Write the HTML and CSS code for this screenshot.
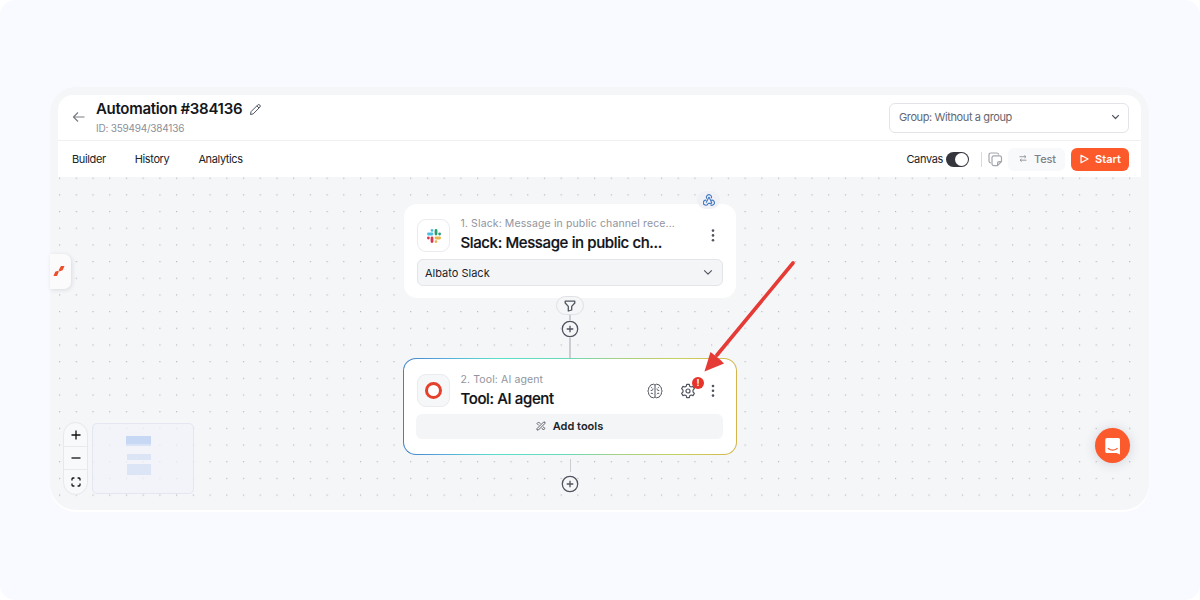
FILE: index.html
```
<!DOCTYPE html>
<html lang="en">
<head>
  <meta charset="UTF-8" />
  <meta name="viewport" content="width=device-width, initial-scale=1.0"/>
  <title>Automation #384136</title>
  <link rel="stylesheet" href="styles.css">
</head>
<body>
  <div class="page">
    <div class="app">
      <header class="top">
        <div class="title-row">
          <svg class="back" width="14" height="12" viewBox="0 0 14 12"><path d="M12.5 6H1.5M6 1.5L1.5 6L6 10.5"/></svg>
          <div class="title">
            <h1>Automation #384136
              <svg width="13" height="13" viewBox="0 0 13 13"><path d="M1.5 11.5L2 8.7L8.8 1.9Q9.8 1 10.8 2Q11.8 3 10.9 4.1L4.2 10.9ZM7.9 2.9L10 5"/></svg>
            </h1>
            <span>ID: 359494/384136</span>
          </div>
          <div class="group">Group: Without a group
            <svg width="9" height="6" viewBox="0 0 9 6"><path d="M1.2 1.2L4.5 4.5L7.8 1.2"/></svg>
          </div>
        </div>
        <div class="tab-row">
          <nav>
            <a>Builder</a>
            <a>History</a>
            <a>Analytics</a>
          </nav>
          <div class="actions">
            <span>Canvas</span>
            <div class="toggle"></div>
            <div class="divider"></div>
            <svg class="copy" width="15" height="15" viewBox="0 0 15 15"><path d="M3 11Q1 10.8 1 9V3Q1 1 3 1H8.5Q10.4 1 10.8 2.6"/><path d="M6 3.8H11.5Q13.5 3.8 13.5 5.8V9.5L9.5 13.7H6Q4 13.7 4 11.7V5.8Q4 3.8 6 3.8ZM13.3 9.6H11Q9.6 9.6 9.6 11V13.4"/></svg>
            <button class="test"><svg width="8" height="7" viewBox="0 0 8 7"><path d="M.5 1.7H7M5.4 .3L7 1.7L5.4 3M7.5 5.2H1M2.6 3.9L1 5.2L2.6 6.6"/></svg>Test</button>
            <button class="start"><svg width="9" height="10" viewBox="0 0 9 10"><path d="M1 1.2V8.8L8 5Z"/></svg>Start</button>
          </div>
        </div>
      </header>

      <main class="canvas">
        <svg class="dots" width="1099" height="333">
          <defs>
            <pattern id="dot" width="16.72" height="16.68" patternUnits="userSpaceOnUse" x="9" y="0.6">
              <rect width="1.2" height="1.2"/>
            </pattern>
          </defs>
          <rect x="8" width="1084" height="322" fill="url(#dot)"/>
        </svg>

        <div class="side-tab">
          <svg width="12" height="12" viewBox="0 0 12 12"><path d="M6 4.6L8 1H11.5L9.6 5.2L6.2 6.5ZM.5 11L2.2 6.7L5.7 5.5L5.5 7.6L4 11Z"/></svg>
        </div>

        <div class="link first"></div>
        <div class="link second"></div>

        <section class="card slack">
          <div class="card-head">
            <div class="logo">
              <svg width="16" height="16" viewBox="0 0 16 16">
                <g stroke-width="2.8" stroke-linecap="round">
                  <path stroke="#4fbfe0" d="M2.4 6H6M6 2.3V2.4"/>
                  <path stroke="#2c9c78" d="M10 2.4V6M13.6 6V6.01"/>
                  <path stroke="#e9b44c" d="M10 10H13.6M10 13.6V13.61"/>
                  <path stroke="#d8344e" d="M6 10V13.6M2.4 10V10.01"/>
                </g>
              </svg>
            </div>
            <div class="names">
              <small>1. Slack: Message in public channel rece...</small>
              <h2>Slack: Message in public ch...</h2>
            </div>
            <svg class="more" width="4" height="14" viewBox="0 0 4 14"><circle cx="2" cy="1.6" r="1.3"/><circle cx="2" cy="6.4" r="1.3"/><circle cx="2" cy="11.2" r="1.3"/></svg>
          </div>
          <div class="account">Albato Slack
            <svg width="10" height="7" viewBox="0 0 10 7"><path d="M1.2 1.4L5 5.2L8.8 1.4"/></svg>
          </div>
          <div class="hook">
            <svg width="12" height="12" viewBox="0 0 12 12"><path d="M3.9 4.6A2.5 2.5 0 1 1 8.2 4.3M6 3.1L3.1 8.7M3.3 6.2A2.5 2.5 0 1 0 5.2 9.4H8.9M6 3.1L8.9 8.9M7.6 6.6A2.5 2.5 0 1 1 7.4 10.7"/></svg>
          </div>
        </section>

        <div class="filter">
          <svg width="12" height="12" viewBox="0 0 12 12"><path d="M1.2 1.2H10.8V3L7.7 6.4V10L4.3 11V6.4L1.2 3Z"/></svg>
        </div>
        <div class="plus one"><svg width="18" height="18" viewBox="0 0 18 18"><circle cx="9" cy="9" r="7.7"/><path d="M9 5.7V12.3M5.7 9H12.3"/></svg></div>

        <section class="card agent">
          <div class="card-head">
            <div class="logo grey"><div class="ring"></div></div>
            <div class="names">
              <small>2. Tool: AI agent</small>
              <h2>Tool: AI agent</h2>
            </div>
            <svg class="brain" width="16" height="16" viewBox="0 0 16 16"><path d="M8 2.1Q6.6 .5 5 1.6Q3.2 1.5 3 3.5Q1 4.2 1.6 6.3Q.2 8 1.6 9.7Q1 11.8 3 12.5Q3.2 14.5 5 14.4Q6.6 15.5 8 13.9Q9.4 15.5 11 14.4Q12.8 14.5 13 12.5Q15 11.8 14.4 9.7Q15.8 8 14.4 6.3Q15 4.2 13 3.5Q12.8 1.5 11 1.6Q9.4 .5 8 2.1V13.9M3.7 7.4H5.1Q6 7.1 6 5.5M3.8 10.3Q5.6 9.8 6 11.2M12.3 7.4H10.9Q10 7.1 10 5.5M12.2 10.3Q10.4 9.8 10 11.2M4.3 4.8L5.1 4M11.7 4.8L10.9 4"/></svg>
            <div class="settings">
              <svg width="16" height="16" viewBox="0 0 16 16"><path d="M6.7 1.3H9.3L9.7 3.2L11.2 4L13 3.4L14.4 5.7L13 7.1V8.9L14.4 10.3L13 12.6L11.2 12L9.7 12.8L9.3 14.7H6.7L6.3 12.8L4.8 12L3 12.6L1.6 10.3L3 8.9V7.1L1.6 5.7L3 3.4L4.8 4L6.3 3.2Z"/><circle cx="8" cy="8" r="2"/></svg>
              <span class="alert">!</span>
            </div>
            <svg class="more" width="4" height="14" viewBox="0 0 4 14"><circle cx="2" cy="2" r="1.3"/><circle cx="2" cy="6.8" r="1.3"/><circle cx="2" cy="11.6" r="1.3"/></svg>
          </div>
          <button class="add"><svg width="10" height="10" viewBox="0 0 10 10"><path d="M1 7.6L7.4 1.2L9 1L8.8 2.6L2.4 9L1 9ZM1 2.6L2.6 1L4.4 2.8M1 2.6L2.8 4.4M5.8 7L7.4 9L9 7.4L7 5.8"/></svg>Add tools</button>
        </section>

        <div class="plus two"><svg width="18" height="18" viewBox="0 0 18 18"><circle cx="9" cy="9" r="7.7"/><path d="M9 5.7V12.3M5.7 9H12.3"/></svg></div>

        <svg class="arrow" width="96" height="116" viewBox="0 0 96 116"><path class="shaft" d="M90 4L14 96"/><path class="tip" d="M1.5 112.5L7.5 93L12 96.5L17 100.5L21 104.5Z"/></svg>

        <div class="zoom">
          <div><svg width="10" height="10" viewBox="0 0 10 10"><path d="M5 .5V9.5M.5 5H9.5"/></svg></div>
          <div><svg width="10" height="10" viewBox="0 0 10 10"><path d="M.5 5H9.5"/></svg></div>
          <div><svg width="10" height="10" viewBox="0 0 10 10"><path d="M1 3.4V2Q1 1 2 1H3.4M6.6 1H8Q9 1 9 2V3.4M9 6.6V8Q9 9 8 9H6.6M3.4 9H2Q1 9 1 8V6.6"/></svg></div>
        </div>
        <div class="minimap"><i></i><i></i><i></i></div>

        <div class="chat">
          <svg width="18" height="18" viewBox="0 0 18 18"><path class="bubble" d="M3 1H14.5Q16 1 16 2.5V17.5L12.5 16H3Q1.3 16 1.3 14.5V2.5Q1.3 1 3 1Z"/><path class="smile" d="M4.2 11.5Q8.7 14.8 13.2 11.5"/></svg>
        </div>
      </main>
    </div>
  </div>
</body>
</html>
```
FILE: styles.css
```
* {
  box-sizing: border-box;
}

body {
  margin: 0;
  background: #fff;
  font-family: Inter, "Liberation Sans", sans-serif;
  color: #202329;
  font-size: 11px;
}

svg {
  display: block;
  flex: none;
  fill: none;
  stroke: #50545e;
  stroke-width: 1.2;
  stroke-linejoin: round;
}

h1, h2 {
  margin: 0;
  font-weight: 600;
  white-space: nowrap;
}

button {
  border: none;
  font: inherit;
  display: flex;
  align-items: center;
  justify-content: center;
}

.page {
  width: 1200px;
  height: 600px;
  padding: 87px 51px 0 50px;
  background: #f9faff;
  border-radius: 15px;
}

.app {
  height: 423px;
  background: #f5f6f8;
  border-radius: 26px;
  box-shadow: 0 2px 0 #fff;
}

.top {
  height: 90px;
  padding: 8px 8px 0;
}

.title-row {
  display: flex;
  align-items: center;
  height: 46px;
  padding: 0 12px 0 14px;
  background: #fff;
  border-radius: 15px 15px 0 0;
  border-bottom: 1px solid #eff0f2;
}

.back {
  margin-top: -1px;
  stroke: #7b7e86;
}

.title {
  margin-left: 10px;
}

.title h1 {
  display: flex;
  align-items: center;
  gap: 7px;
  font-size: 15px;
  line-height: 18px;
  letter-spacing: -0.3px;
  color: #14161b;
}

.title h1 svg {
  margin-top: 1px;
  stroke-width: 1;
}

.title span {
  display: block;
  margin-top: 3px;
  font-size: 10px;
  line-height: 14px;
  letter-spacing: -0.22px;
  color: #8b8f98;
}

.group {
  display: flex;
  align-items: center;
  justify-content: space-between;
  width: 240px;
  height: 30px;
  margin-left: auto;
  padding: 0 8px 1px 9px;
  border: 1px solid #e2e4e9;
  border-radius: 6px;
  letter-spacing: -0.39px;
  color: #636771;
}

.tab-row {
  display: flex;
  align-items: center;
  justify-content: space-between;
  height: 36px;
  padding: 0 12px 0 14px;
  background: #fff;
}

nav {
  display: flex;
  gap: 29px;
  letter-spacing: -0.37px;
}

.actions {
  display: flex;
  align-items: center;
  letter-spacing: -0.35px;
}

.toggle {
  width: 23px;
  height: 15px;
  margin-left: 3px;
  padding: 1px;
  border-radius: 8px;
  background: #34353d;
}

.toggle::before {
  content: "";
  display: block;
  width: 13px;
  height: 13px;
  margin-left: 8px;
  border-radius: 50%;
  background: #fff;
}

.divider {
  width: 1px;
  height: 15px;
  margin: 0 6px 0 12px;
  background: #d8dadf;
}

.copy {
  stroke: #a3a6ae;
}

.test {
  gap: 7px;
  width: 57px;
  height: 23px;
  margin: 0 6px 0 5px;
  padding: 0 0 1px 2px;
  border-radius: 6px;
  background: #f8f9fa;
  color: #7d8088;
  font-weight: 500;
  letter-spacing: -0.15px;
}

.test svg {
  margin-top: -1px;
  stroke: #8f929a;
  stroke-width: 0.9;
}

.start {
  gap: 6px;
  width: 58px;
  height: 23px;
  padding: 0 0 1px 1px;
  border-radius: 6px;
  background: #fd5a2c;
  color: #fff;
  font-weight: 600;
}

.start svg {
  stroke: #fff;
}

/* canvas: everything inside is placed on the free board */
.canvas {
  position: relative;
  height: 333px;
}

.dots {
  position: absolute;
  inset: 0;
  stroke: none;
}

.dots pattern rect {
  fill: #b6b9c0;
}

.side-tab {
  position: absolute;
  left: 0;
  top: 77px;
  width: 21px;
  height: 35px;
  padding: 11px 0 0 3px;
  background: #fbfbfc;
  border-radius: 0 7px 7px 0;
  box-shadow: 1px 1px 4px rgba(40, 50, 80, 0.13);
}

.side-tab svg {
  fill: #ee4e2b;
  stroke: none;
}

.link {
  position: absolute;
  left: 519px;
  width: 2px;
  background: #cbcdd2;
}

.link.first {
  top: 121px;
  height: 61px;
}

.link.second {
  top: 282px;
  width: 1px;
  left: 520px;
  height: 13px;
}

.card {
  position: absolute;
  width: 332px;
  height: 94px;
  padding: 15px 13px 0;
  background: #fff;
  border-radius: 13px;
}

.slack {
  left: 354px;
  top: 27px;
}

.card-head {
  display: flex;
  align-items: center;
  height: 33px;
}

.logo {
  display: flex;
  align-items: center;
  justify-content: center;
  width: 33px;
  height: 33px;
  border: 1px solid #e9ebef;
  border-radius: 9px;
}

.logo.grey {
  background: #f6f7f8;
}

.ring {
  width: 17px;
  height: 17px;
  border: 3px solid #e4402c;
  border-radius: 50%;
  background: #fff;
}

.names {
  flex: 1;
  margin-left: 10.5px;
}

.names small {
  display: block;
  margin-top: -2px;
  font-size: 10.5px;
  line-height: 15px;
  letter-spacing: 0.12px;
  color: #9194a0;
  white-space: nowrap;
}

.names h2 {
  margin-top: 1px;
  font-size: 15px;
  font-weight: 500;
  line-height: 22px;
  letter-spacing: -0.38px;
  color: #101217;
  -webkit-text-stroke: 0.2px #101217;
}

.slack .names {
  padding-top: 1px;
}

.more {
  margin-right: 8px;
}

.more circle {
  fill: #50545e;
  stroke: none;
}

.account {
  display: flex;
  align-items: center;
  justify-content: space-between;
  width: 306px;
  height: 27px;
  margin-top: 7px;
  padding: 0 9px 0 7px;
  border: 1px solid #e3e5e9;
  border-radius: 6px;
  background: #f4f5f7;
  font-size: 11px;
}

.hook {
  position: absolute;
  right: 16px;
  top: -13px;
  display: flex;
  align-items: center;
  justify-content: center;
  width: 23px;
  height: 18px;
  border-radius: 9px;
  background: #eff1f6;
}

.hook svg {
  stroke: #4479c0;
  stroke-width: 1.1;
}

.filter {
  position: absolute;
  left: 506px;
  top: 119px;
  display: flex;
  align-items: center;
  justify-content: center;
  width: 28px;
  height: 19px;
  border: 1px solid #dfe1e5;
  border-radius: 10px;
  background: #f5f6f8;
}

.filter svg {
  stroke-width: 1.3;
}

.plus {
  position: absolute;
  left: 511px;
  border-radius: 50%;
  background: #f5f6f8;
}

.plus svg {
  stroke-width: 1.3;
}

.plus.one {
  top: 143px;
}

.plus.two {
  top: 298px;
}

.agent {
  left: 353px;
  top: 181px;
  width: 334px;
  height: 97px;
  border: 1.5px solid transparent;
  background: linear-gradient(#fff, #fff) padding-box, linear-gradient(90deg, #4181c8, #57a9dd 12%, #5be0c8 28%, #67d9bd 48%, #a5d187 64%, #cad05e 84%, #d4b54b) border-box;
}

.agent .names {
  padding-top: 2px;
}

.brain {
  margin-right: 17px;
  stroke-width: 1;
}

.settings {
  position: relative;
  margin-right: 15px;
}

.agent .more {
  margin-right: 8px;
}

.alert {
  position: absolute;
  left: 12px;
  top: -6px;
  width: 12px;
  height: 12px;
  border-radius: 50%;
  background: #e8322c;
  color: #fff;
  font-size: 9px;
  font-weight: 700;
  line-height: 12px;
  text-align: center;
}

.add {
  gap: 7px;
  width: 307px;
  height: 25px;
  margin: 7px 0 0 -1px;
  padding: 0 0 1px;
  border-radius: 6px;
  background: #f4f5f7;
  color: #202329;
  font-weight: 600;
}

.add svg {
  stroke-width: 0.9;
}

.arrow {
  position: absolute;
  left: 653px;
  top: 82px;
}

.shaft {
  stroke: #e53a35;
  stroke-width: 3.6;
  stroke-linecap: round;
}

.tip {
  fill: #e53a35;
  stroke: none;
}

.zoom {
  position: absolute;
  left: 13px;
  top: 245px;
  width: 25px;
  height: 73px;
  border: 1px solid #e6e8ec;
  border-radius: 13px;
  background: #f8f9fa;
}

.zoom div {
  display: flex;
  align-items: center;
  justify-content: center;
  height: 23px;
}

.zoom div + div {
  border-top: 1px solid #e8eaed;
}

.zoom div:last-child {
  height: 25px;
}

.zoom svg {
  stroke: #111;
  stroke-width: 1.3;
}

.minimap {
  position: absolute;
  left: 42px;
  top: 246px;
  width: 102px;
  height: 71px;
  padding: 12px 0 0 33px;
  border: 1px solid #e4e7f2;
  border-radius: 5px;
  background: rgba(240, 243, 250, 0.75);
}

.minimap i {
  display: block;
  width: 24px;
  height: 6px;
  margin: 0 0 8px 1px;
  background: #dbe5f6;
}

.minimap i:first-child {
  width: 25px;
  height: 10px;
  margin-left: 0;
  background: linear-gradient(#c7d8f4 80%, #d9e4f7 80%);
}

.minimap i:last-child {
  height: 11px;
  margin-top: -4px;
}

.chat {
  position: absolute;
  left: 1045px;
  top: 251px;
  display: flex;
  align-items: center;
  justify-content: center;
  width: 35px;
  height: 35px;
  border-radius: 50%;
  background: #fb5a2d;
  box-shadow: 0 1px 12px rgba(40, 50, 70, 0.18);
}

.chat svg {
  stroke: none;
}

.bubble {
  fill: #fff;
}

.smile {
  stroke: #fb5a2d;
  stroke-linecap: round;
}
```
